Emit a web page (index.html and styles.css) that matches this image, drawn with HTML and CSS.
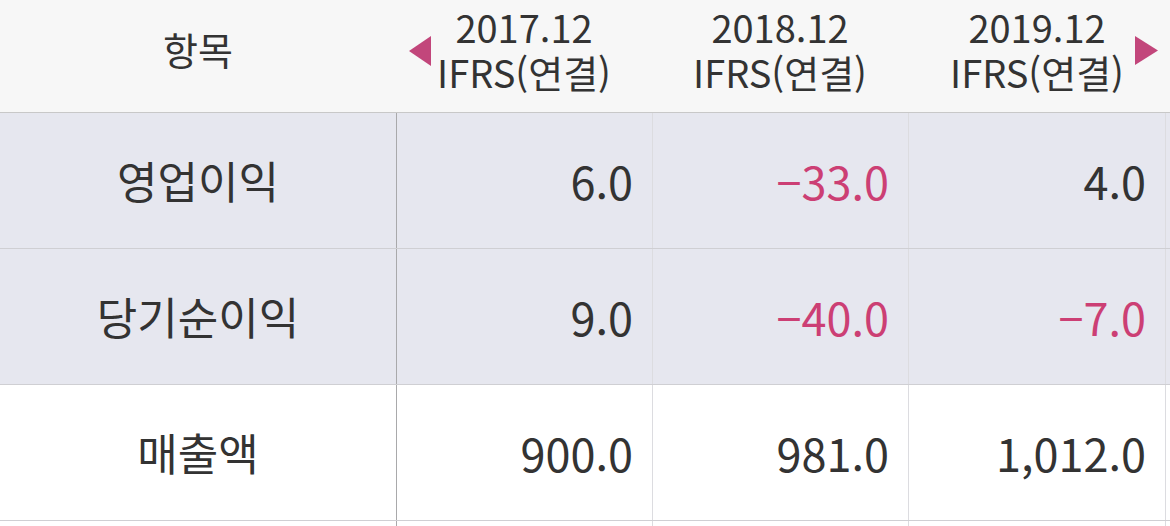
FILE: index.html
```html
<!DOCTYPE html>
<html lang="ko">
<head>
<meta charset="utf-8">
<link rel="stylesheet" href="styles.css">
</head>
<body>
<div class="table">
  <div class="row head">
    <div class="cell label">항목</div>
    <div class="cell period">
      <svg class="arrow left" width="22" height="30" viewBox="0 0 22 30"><polygon points="22,0 22,30 0,15" fill="#c2467b"/></svg>
      <span>2017.12</span><span>IFRS(연결)</span>
    </div>
    <div class="cell period"><span>2018.12</span><span>IFRS(연결)</span></div>
    <div class="cell period">
      <span>2019.12</span><span>IFRS(연결)</span>
      <svg class="arrow right" width="23" height="29" viewBox="0 0 23 29"><polygon points="0,0 23,14.5 0,29" fill="#c2467b"/></svg>
    </div>
  </div>
  <div class="row shade">
    <div class="cell label">영업이익</div>
    <div class="cell num first">6.0</div>
    <div class="cell num neg">−33.0</div>
    <div class="cell num last">4.0</div>
  </div>
  <div class="row shade">
    <div class="cell label">당기순이익</div>
    <div class="cell num first">9.0</div>
    <div class="cell num neg">−40.0</div>
    <div class="cell num neg last">−7.0</div>
  </div>
  <div class="row">
    <div class="cell label">매출액</div>
    <div class="cell num first">900.0</div>
    <div class="cell num">981.0</div>
    <div class="cell num last">1,012.0</div>
  </div>
  <div class="row tail">
    <div class="cell label"></div>
    <div class="cell num first"></div>
    <div class="cell num"></div>
    <div class="cell num last"></div>
  </div>
</div>
</body>
</html>
```
FILE: styles.css
```css
html, body {
  margin: 0;
  padding: 0;
  background: #ffffff;
}
body {
  font-family: "Noto Sans CJK KR", "Noto Sans", sans-serif;
  font-weight: 400;
  color: #333333;
  width: 1170px;
  height: 526px;
  overflow: hidden;
}
.table {
  display: flex;
  flex-direction: column;
}
.row {
  display: grid;
  grid-template-columns: 396px 256px 256px 258px 4px;
  height: 135px;
  border-bottom: 1px solid #cfcfd3;
}
.row.head {
  height: 112px;
  background: #f7f7f7;
  border-bottom-color: #c8c8c8;
}
.row.shade {
  background: #e6e7ef;
}
.row.tail {
  height: 20px;
  border-bottom: none;
}
.cell {
  display: flex;
  align-items: center;
}
.cell.label {
  justify-content: center;
  font-size: 44px;
  padding-bottom: 2px;
}
.head .cell.label {
  font-size: 38px;
  padding-bottom: 16px;
}
.cell.period {
  position: relative;
  flex-direction: column;
  justify-content: center;
  font-size: 38px;
  line-height: 45px;
  padding-bottom: 14px;
}
.arrow {
  position: absolute;
  top: 36px;
}
.arrow.left {
  left: 13px;
}
.arrow.right {
  right: 8px;
}
.cell.num {
  justify-content: flex-end;
  padding-right: 19px;
  font-size: 45px;
  border-left: 1px solid #dcdce0;
}
.cell.num.first {
  border-left-color: #a9a9ab;
}
.cell.num.last {
  border-right: 1px solid #dcdce0;
}
.neg {
  color: #cc3f74;
}
```
